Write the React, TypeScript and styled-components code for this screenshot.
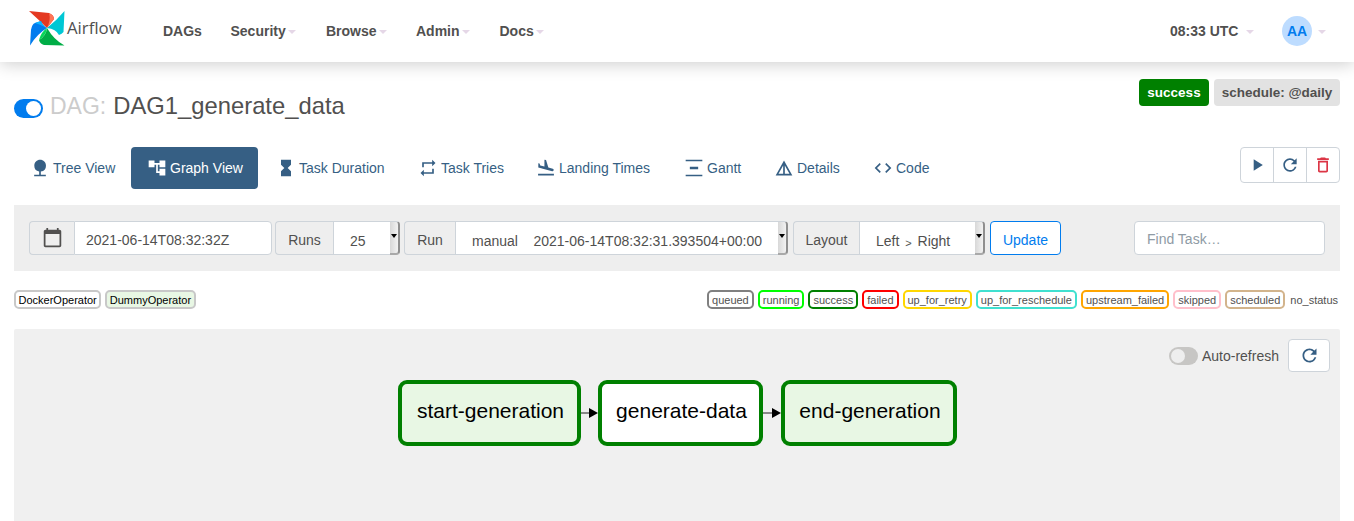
import React from 'react';
import styled, { createGlobalStyle } from 'styled-components';
import {
  MdNature,
  MdAccountTree,
  MdHourglassFull,
  MdRepeat,
  MdFlightLand,
  MdVerticalDistribute,
  MdDetails,
  MdCode,
  MdCalendarToday,
  MdPlayArrow,
  MdRefresh,
  MdDeleteOutline,
} from 'react-icons/md';

const GlobalStyle = createGlobalStyle`
  html, body {
    margin: 0;
    height: 521px;
    overflow: hidden;
    background: #fff;
    font-family: "Liberation Sans", Arial, sans-serif;
    font-size: 14px;
    color: #51504f;
  }
  * { box-sizing: border-box; }
`;

const NavBar = styled.nav`
  height: 62px;
  display: flex;
  align-items: center;
  padding: 0 29px;
  background: #fff;
  box-shadow: 0 2px 16px rgba(0, 0, 0, 0.2);
`;

const Brand = styled.div`
  display: flex;
  align-items: center;
  width: 134px;
  height: 62px;
  padding-bottom: 5px;
`;

const BrandName = styled.span`
  font-family: "Open Sans", sans-serif;
  font-size: 16.8px;
  margin: -2px 0 0 1px;
  color: #51504f;
`;

const NavItem = styled.div<{ $width: number }>`
  width: ${({ $width }) => $width}px;
  display: flex;
  align-items: center;
  font-weight: 700;
  font-size: 14px;
`;

const Caret = styled.i`
  display: inline-block;
  margin: 2px 0 0 2px;
  border-top: 4px solid #e5d7e7;
  border-left: 4px solid transparent;
  border-right: 4px solid transparent;
`;

const NavRight = styled.div`
  margin-left: auto;
  display: flex;
  align-items: center;
  margin-right: -1px;
`;

const Clock = styled.div`
  width: 112px;
  font-weight: 700;
  display: flex;
  align-items: center;
  gap: 6px;
`;

const Avatar = styled.div`
  width: 30px;
  height: 30px;
  border-radius: 50%;
  background: #bddcff;
  color: #017cee;
  font-weight: 700;
  font-size: 14px;
  display: flex;
  align-items: center;
  justify-content: center;
  margin-right: 4px;
`;

const Page = styled.main`
  padding: 0 14px;
`;

const TitleRow = styled.div`
  display: flex;
  justify-content: space-between;
  align-items: flex-start;
  height: 85px;
  padding-top: 17px;
`;

const DagTitle = styled.h1`
  margin: 12px 0 0;
  font-size: 23.8px;
  font-weight: 400;
  line-height: 30px;
  display: flex;
  align-items: center;
  color: #51504f;
`;

const DagPrefix = styled.span`
  color: #ccc;
  font-size: 23px;
  margin: 0 7px 0 7px;
`;

const PauseToggle = styled.span`
  position: relative;
  display: inline-block;
  width: 29px;
  height: 19px;
  margin-top: 4px;
  border-radius: 10px;
  background: #017cee;
  &::after {
    content: '';
    position: absolute;
    right: 2px;
    top: 2px;
    width: 15px;
    height: 15px;
    border-radius: 50%;
    background: #fff;
  }
`;

const Badges = styled.div`
  display: flex;
  gap: 5px;
`;

const Badge = styled.span<{ $bg: string; $fg: string; $width: number }>`
  width: ${({ $width }) => $width}px;
  height: 27px;
  display: flex;
  align-items: center;
  justify-content: center;
  border-radius: 4px;
  font-size: 13.5px;
  font-weight: 700;
  white-space: nowrap;
  background: ${({ $bg }) => $bg};
  color: ${({ $fg }) => $fg};
`;

const TabRow = styled.div`
  display: flex;
  justify-content: space-between;
  height: 58px;
  align-items: flex-start;
`;

const Tabs = styled.div`
  display: flex;
  gap: 2px;
`;

const Tab = styled.a<{ $active?: boolean; $width: number }>`
  width: ${({ $width }) => $width}px;
  height: 42px;
  padding-left: 16px;
  display: flex;
  align-items: center;
  gap: 3px;
  border-radius: 4px;
  white-space: nowrap;
  color: ${({ $active }) => ($active ? '#fff' : '#365f84')};
  background: ${({ $active }) => ($active ? '#365f84' : 'transparent')};
  svg {
    width: 20px;
    height: 20px;
    flex: none;
  }
`;

const ActionGroup = styled.div`
  display: flex;
  height: 36px;
  width: 100px;
  border: 1px solid #ced4da;
  border-radius: 4px;
`;

const ActionButton = styled.button<{ $danger?: boolean }>`
  flex: 1;
  padding: 0;
  border: 0;
  background: transparent;
  display: flex;
  align-items: center;
  justify-content: center;
  color: ${({ $danger }) => ($danger ? '#dc3545' : '#365f84')};
  & + & {
    border-left: 1px solid #ced4da;
  }
  svg {
    width: 20px;
    height: 20px;
  }
`;

const Toolbar = styled.div`
  height: 66px;
  background: #eee;
  display: flex;
  align-items: center;
  padding: 0 15px;
`;

const InputGroup = styled.div<{ $width: number; $gap: number }>`
  width: ${({ $width }) => $width}px;
  margin-right: ${({ $gap }) => $gap}px;
  height: 34px;
  display: flex;
  flex: none;
`;

const GroupLabel = styled.span<{ $width: number }>`
  width: ${({ $width }) => $width}px;
  flex: none;
  display: flex;
  align-items: center;
  justify-content: center;
  padding-top: 4px;
  background: #eee;
  border: 1px solid #ced4da;
  border-right: 0;
  border-radius: 4px 0 0 4px;
  svg {
    width: 21px;
    height: 21px;
    margin-top: -6px;
  }
`;

const TextField = styled.span`
  flex: 1;
  display: flex;
  align-items: center;
  padding: 4px 0 0 11px;
  background: #fff;
  border: 1px solid #ced4da;
  border-radius: 0 4px 4px 0;
`;

const SelectField = styled.span`
  flex: 1;
  min-width: 0;
  display: flex;
  align-items: center;
  padding: 5px 0 0 16px;
  white-space: pre;
  background: #fff;
  border: 1px solid #ced4da;
  border-right: 0;
`;

const LayoutArrow = styled.span`
  font-size: 11px;
  margin: 4px 2px 0;
`;

const SelectArrow = styled.span`
  width: 10px;
  flex: none;
  display: flex;
  align-items: center;
  justify-content: center;
  background: linear-gradient(to right, #d8d8d8, #f2f2f2);
  border-top: 1px solid #ced4da;
  border-bottom: 2px solid #a9a9a9;
  border-right: 2px solid #8f8f8f;
  border-radius: 0 4px 4px 0;
  &::after {
    content: '';
    margin-top: -4px;
    border-top: 4px solid #000;
    border-left: 3px solid transparent;
    border-right: 3px solid transparent;
  }
`;

const UpdateButton = styled.button`
  width: 71px;
  height: 34px;
  flex: none;
  padding: 4px 0 0;
  font: inherit;
  color: #017cee;
  background: #fff;
  border: 1px solid #017cee;
  border-radius: 4px;
`;

const FindTask = styled.span`
  width: 191px;
  height: 34px;
  flex: none;
  margin-left: 73px;
  padding: 2px 0 0 12px;
  display: flex;
  align-items: center;
  color: #8f9ba5;
  background: #fff;
  border: 1px solid #ced4da;
  border-radius: 4px;
`;

const LegendRow = styled.div`
  height: 58px;
  padding-top: 19px;
  display: flex;
  justify-content: space-between;
  align-items: flex-start;
`;

const LegendGroup = styled.div`
  display: flex;
  gap: 4px;
`;

const Chip = styled.span<{ $border: string; $bg?: string; $fg?: string; $tight?: boolean }>`
  height: 19px;
  padding: 0 ${({ $tight }) => ($tight ? '2.5px' : '3px')};
  display: flex;
  align-items: center;
  font-size: 11px;
  border: 2px solid ${({ $border }) => $border};
  border-radius: 5px;
  background: ${({ $bg }) => $bg || '#fff'};
  color: ${({ $fg }) => $fg || '#51504f'};
`;

const PlainChip = styled.span`
  height: 19px;
  margin-left: 1px;
  display: flex;
  align-items: center;
  font-size: 11px;
  padding-right: 2px;
`;

const GraphPanel = styled.section`
  height: 200px;
  background: #f0f0f0;
  border-radius: 2px;
`;

const GraphControls = styled.div`
  height: 51px;
  padding: 10px 10px 0 0;
  display: flex;
  justify-content: flex-end;
  align-items: flex-start;
`;

const AutoRefresh = styled.label`
  height: 33px;
  display: flex;
  align-items: center;
  gap: 4px;
  margin-right: 9px;
  color: #51504f;
`;

const RefreshToggle = styled.span`
  position: relative;
  width: 29px;
  height: 18px;
  border-radius: 9px;
  background: #c7c6c4;
  &::after {
    content: '';
    position: absolute;
    left: 2px;
    top: 2px;
    width: 14px;
    height: 14px;
    border-radius: 50%;
    background: #eee;
  }
`;

const RefreshButton = styled.button`
  width: 42px;
  height: 33px;
  padding: 0;
  display: flex;
  align-items: center;
  justify-content: center;
  color: #365f84;
  background: #fff;
  border: 1px solid #ced4da;
  border-radius: 4px;
  svg {
    width: 21px;
    height: 21px;
  }
`;

const GraphRow = styled.div`
  display: flex;
  align-items: center;
  padding-left: 384px;
`;

const TaskNode = styled.div<{ $width: number; $fill: string }>`
  width: ${({ $width }) => $width}px;
  height: 66px;
  flex: none;
  display: flex;
  align-items: center;
  justify-content: center;
  padding: 0 0 5px 2px;
  font-size: 21px;
  color: #000;
  background: ${({ $fill }) => $fill};
  border: 4px solid #008000;
  border-radius: 9px;
`;

const EdgeArrow = ({ width }: { width: number }) => (
  <svg width={width} height="10" viewBox={`0 0 ${width} 10`} style={{ flex: 'none' }}>
    <line x1="0" y1="5" x2={width - 7} y2="5" stroke="#666" strokeWidth="1.5" />
    <path d={`M${width - 9} 0 L${width} 5 L${width - 9} 10 Z`} fill="#000" />
  </svg>
);

const PinwheelLogo = () => (
  <svg width="37" height="37" viewBox="0 0 37 37" style={{ flex: 'none' }}>
    <path d="M0 1 L20 3 Q25 5 25 9 L18 18 Q10 10 0 1 Z" fill="#e43921" />
    <path d="M20 3 Q25 5 25 9 L18 18 Q22 10 20 3 Z" fill="#ff7557" />
    <path d="M35.5 1 L34.5 22 Q33 24 30 25 Q27 19 18 18 Q27 11 35.5 1 Z" fill="#00c7d4" />
    <path d="M1 35.5 L2 20 Q3 14 6 13 L12 11 Q13 15 18 18 Q8 24 1 35.5 Z" fill="#017cee" />
    <path d="M12 11 Q13 15 18 18 Q10 14 6 13 Z" fill="#0cb6ff" />
    <path d="M35.5 35.5 L15 35 Q11 34 10 30 Q17 26 18 18 Q25 30 35.5 35.5 Z" fill="#00ad46" />
    <path d="M10 30 Q17 26 18 18 Q12 22 10 30 Z" fill="#04d659" />
  </svg>
);

const navItems = [
  { label: 'DAGs', width: 67.5 },
  { label: 'Security', width: 95.5, caret: true },
  { label: 'Browse', width: 90, caret: true },
  { label: 'Admin', width: 83.5, caret: true },
  { label: 'Docs', width: 60, caret: true },
];

const tabs = [
  { label: 'Tree View', width: 115, icon: <MdNature /> },
  { label: 'Graph View', width: 127, icon: <MdAccountTree />, active: true },
  { label: 'Task Duration', width: 140, icon: <MdHourglassFull /> },
  { label: 'Task Tries', width: 116, icon: <MdRepeat /> },
  { label: 'Landing Times', width: 146, icon: <MdFlightLand /> },
  { label: 'Gantt', width: 88, icon: <MdVerticalDistribute /> },
  { label: 'Details', width: 97, icon: <MdDetails /> },
  { label: 'Code', width: 70, icon: <MdCode /> },
];

const states = [
  { label: 'queued', color: '#808080' },
  { label: 'running', color: '#00ff00' },
  { label: 'success', color: '#008000' },
  { label: 'failed', color: '#ff0000' },
  { label: 'up_for_retry', color: '#ffd700' },
  { label: 'up_for_reschedule', color: '#40e0d0' },
  { label: 'upstream_failed', color: '#ffa500' },
  { label: 'skipped', color: '#ffc0cb' },
  { label: 'scheduled', color: '#d2b48c' },
];

export default function App() {
  return (
    <>
      <GlobalStyle />
      <NavBar>
        <Brand>
          <PinwheelLogo />
          <BrandName>Airflow</BrandName>
        </Brand>
        {navItems.map((item) => (
          <NavItem key={item.label} $width={item.width}>
            {item.label}
            {item.caret && <Caret />}
          </NavItem>
        ))}
        <NavRight>
          <Clock>
            08:33 UTC
            <Caret />
          </Clock>
          <Avatar>AA</Avatar>
          <Caret />
        </NavRight>
      </NavBar>
      <Page>
        <TitleRow>
          <DagTitle>
            <PauseToggle />
            <DagPrefix>DAG:</DagPrefix>
            DAG1_generate_data
          </DagTitle>
          <Badges>
            <Badge $bg="#008000" $fg="#fff" $width={70}>success</Badge>
            <Badge $bg="#e2e2e2" $fg="#51504f" $width={126}>schedule: @daily</Badge>
          </Badges>
        </TitleRow>
        <TabRow>
          <Tabs>
            {tabs.map((tab) => (
              <Tab key={tab.label} $active={tab.active} $width={tab.width}>
                {tab.icon}
                {tab.label}
              </Tab>
            ))}
          </Tabs>
          <ActionGroup>
            <ActionButton><MdPlayArrow /></ActionButton>
            <ActionButton><MdRefresh /></ActionButton>
            <ActionButton $danger><MdDeleteOutline /></ActionButton>
          </ActionGroup>
        </TabRow>
        <Toolbar>
          <InputGroup $width={243} $gap={3}>
            <GroupLabel $width={45}><MdCalendarToday /></GroupLabel>
            <TextField>2021-06-14T08:32:32Z</TextField>
          </InputGroup>
          <InputGroup $width={125} $gap={4}>
            <GroupLabel $width={58}>Runs</GroupLabel>
            <SelectField>25</SelectField>
            <SelectArrow />
          </InputGroup>
          <InputGroup $width={384} $gap={5}>
            <GroupLabel $width={51}>Run</GroupLabel>
            <SelectField>{'manual    2021-06-14T08:32:31.393504+00:00'}</SelectField>
            <SelectArrow />
          </InputGroup>
          <InputGroup $width={192} $gap={5}>
            <GroupLabel $width={66}>Layout</GroupLabel>
            <SelectField>Left <LayoutArrow>&gt;</LayoutArrow> Right</SelectField>
            <SelectArrow />
          </InputGroup>
          <UpdateButton>Update</UpdateButton>
          <FindTask>Find Task…</FindTask>
        </Toolbar>
        <LegendRow>
          <LegendGroup>
            <Chip $border="#c8c8c8" $fg="#000" $tight>DockerOperator</Chip>
            <Chip $border="#c8c8c8" $bg="#e8f7e4" $fg="#000" $tight>DummyOperator</Chip>
          </LegendGroup>
          <LegendGroup>
            {states.map((s) => (
              <Chip key={s.label} $border={s.color}>{s.label}</Chip>
            ))}
            <PlainChip>no_status</PlainChip>
          </LegendGroup>
        </LegendRow>
        <GraphPanel>
          <GraphControls>
            <AutoRefresh>
              <RefreshToggle />
              Auto-refresh
            </AutoRefresh>
            <RefreshButton><MdRefresh /></RefreshButton>
          </GraphControls>
          <GraphRow>
            <TaskNode $width={183} $fill="#e8f7e4">start-generation</TaskNode>
            <EdgeArrow width={17} />
            <TaskNode $width={165} $fill="#fff">generate-data</TaskNode>
            <EdgeArrow width={18} />
            <TaskNode $width={176} $fill="#e8f7e4">end-generation</TaskNode>
          </GraphRow>
        </GraphPanel>
      </Page>
    </>
  );
}
